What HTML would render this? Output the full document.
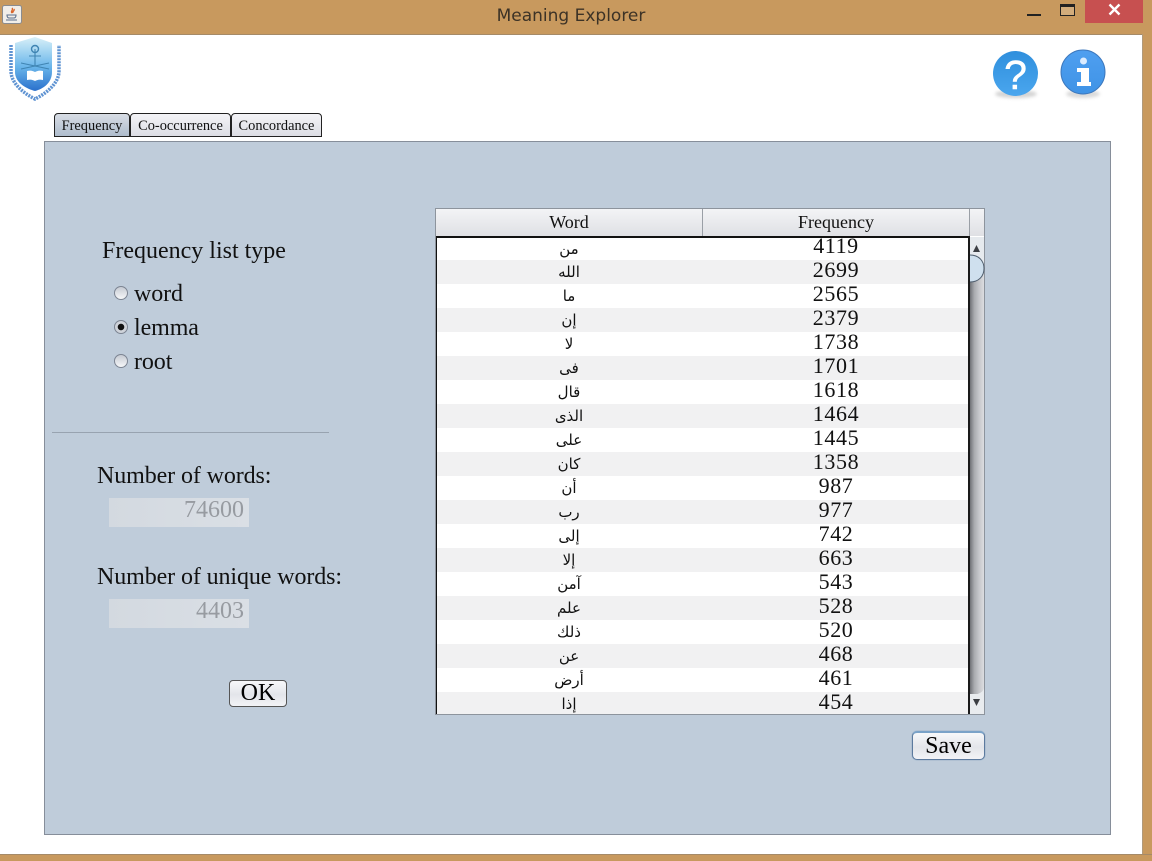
<!DOCTYPE html>
<html><head><meta charset="utf-8"><style>
html,body{margin:0;padding:0;width:1152px;height:861px;overflow:hidden;background:#fff;font-family:"Liberation Serif",serif;color:#111}
.a{position:absolute;white-space:nowrap}
.t{font-size:24px;line-height:28px;letter-spacing:-.1px}
.tab{position:absolute;top:113px;height:24px;box-sizing:border-box;border:1px solid #222;border-radius:4px 4px 0 0;background:linear-gradient(#f4f4f7,#dcdde4);font-size:14.4px;line-height:24px;text-align:center;color:#111}
.radio{position:absolute;left:114px;width:14px;height:14px;box-sizing:border-box;border:1px solid #7c8492;border-radius:50%;background:linear-gradient(#c6cbd3,#f6f7f9)}
.field{position:absolute;left:109px;width:140px;height:29px;background:linear-gradient(90deg,#d3d9e0,#dadfe5);color:#979ba1;font-size:24px;line-height:24px;text-align:right;box-sizing:border-box;padding-right:5px}
.row{position:absolute;left:437px;width:532px;height:24px}
.w{position:absolute;left:0;width:264px;text-align:center;font-family:"DejaVu Sans",sans-serif;font-size:15px;line-height:24px;top:0}
.n{position:absolute;left:266px;width:266px;text-align:center;font-size:22px;line-height:18px;top:1px;letter-spacing:.6px}
.btn{position:absolute;box-sizing:border-box;background:linear-gradient(#f7f8fa,#e3e5ea 55%,#f2f3f6);text-align:center;color:#000}
</style></head><body>
<div class="a" style="left:0;top:0;width:1152px;height:34px;background:#c8995e;border-bottom:1px solid #a58a68"></div>
<div class="a" style="left:1142px;top:34px;width:10px;height:827px;background:#c8995e;border-left:1px solid #b09a7c;box-sizing:border-box"></div>
<div class="a" style="left:0;top:854px;width:1152px;height:7px;background:#c8995e;border-top:1px solid #a58a68;box-sizing:border-box"></div>

<svg class="a" style="left:2px;top:5px" width="21" height="20" viewBox="0 0 21 20"><rect x=".5" y=".5" width="19" height="18" rx="2" fill="#f1eee9" stroke="#8a8c90"/><path d="M10 3c2 2-2 3 0 5M12 4c1 2-2 2-1 4" stroke="#d9662c" stroke-width="1.4" fill="none"/><path d="M5 10h9c0 2-1 3-2 3H7c-1 0-2-1-2-3zM4 15h11" stroke="#5b6f8c" stroke-width="1.1" fill="none"/></svg>
<div class="a" style="left:0;top:6px;width:1142px;text-align:center;font-family:'DejaVu Sans','Liberation Sans',sans-serif;font-size:17px;line-height:20px;color:#3c3226">Meaning Explorer</div>
<div class="a" style="left:1027px;top:14px;width:14px;height:2px;background:#222"></div>
<div class="a" style="left:1060px;top:4px;width:15px;height:12px;box-sizing:border-box;border:1px solid #222;border-top:3px solid #222;background:#d3ad7c"></div>
<div class="a" style="left:1085px;top:0;width:58px;height:23px;background:#c75050"></div>
<svg class="a" style="left:1107px;top:2px" width="15" height="15" viewBox="0 0 15 15"><path d="M2.500 2.500l10 10M12.500 2.500l-10 10" stroke="#fff" stroke-width="2.400"/></svg>

<!-- logo -->
<svg class="a" style="left:7px;top:36px;filter:blur(.35px)" width="56" height="66" viewBox="0 0 56 66">
<defs><linearGradient id="s" x1="0" y1="0" x2="0" y2="1"><stop offset="0" stop-color="#d8f0f8"/><stop offset=".55" stop-color="#6ab6ea"/><stop offset="1" stop-color="#2a70cc"/></linearGradient></defs>
<path d="M28 1L45 7V36C45 47 36 53 28 55C20 53 8 47 8 36V7Z" fill="url(#s)"/>
<path d="M4 9V35C4 48 18 58 28 63C38 58 52 48 52 35V9" fill="none" stroke="#5f93d2" stroke-width="3.500" stroke-dasharray="2 1"/>
<path d="M28 13V30M22 20h12M14 27l28 6M42 27l-28 6" stroke="#3f84b2" stroke-width="1.100" fill="none"/>
<circle cx="28" cy="13" r="3.500" fill="none" stroke="#3f84b2" stroke-width="1.400"/>
<path d="M20 35c4-1 6 0 8 1 2-1 4-2 8-1v9c-4-1-6 0-8 1-2-1-4-2-8-1z" fill="#fff"/>
</svg>

<!-- help / info -->
<svg class="a" style="left:985px;top:44px" width="130" height="62" viewBox="0 0 130 62">
<defs>
<linearGradient id="h" x1="0" y1="0" x2="0" y2="1"><stop offset="0" stop-color="#2f8fdd"/><stop offset="1" stop-color="#4aa6ee"/></linearGradient>
<linearGradient id="i" x1="0" y1="0" x2="0" y2="1"><stop offset="0" stop-color="#4f9ff0"/><stop offset="1" stop-color="#3f93e6"/></linearGradient>
</defs>
<ellipse cx="31" cy="50" rx="21" ry="4" fill="#d4d4d4" style="filter:blur(1.500px)"/>
<ellipse cx="98" cy="50" rx="17" ry="4" fill="#dadada" style="filter:blur(1.500px)"/>
<circle cx="30.500" cy="29.500" r="22.500" fill="url(#h)"/>
<text x="30.500" y="45" text-anchor="middle" font-family="Liberation Sans,sans-serif" font-size="41" fill="#fff" stroke="#fff" stroke-width=".5">?</text>
<circle cx="98" cy="28" r="22" fill="url(#i)" stroke="#3d78bd" stroke-width="1"/>
<circle cx="98.500" cy="17" r="3.500" fill="#dcecff"/>
<path d="M92 24H104V38H106V42H92V38H96V28H92Z" fill="#fff"/>
</svg>

<div class="tab" style="left:54px;width:76px;background:linear-gradient(#d8dde5,#aebccc);">Frequency</div>
<div class="tab" style="left:130px;width:101px">Co-occurrence</div>
<div class="tab" style="left:231px;width:91px">Concordance</div>

<div class="a" style="left:44px;top:141px;width:1067px;height:694px;box-sizing:border-box;background:#bfccda;border:1px solid #868e9a"></div>

<div class="a" style="left:102px;top:237px;font-size:24px;line-height:28px">Frequency list type</div>
<div class="radio" style="top:286px"></div>
<div class="a t" style="left:134px;top:280px">word</div>
<div class="radio" style="top:320px;background:radial-gradient(circle,#111 0 3px,#cfd3da 3.500px)"></div>
<div class="a t" style="left:134px;top:314px">lemma</div>
<div class="radio" style="top:354px"></div>
<div class="a t" style="left:134px;top:348px">root</div>
<div class="a" style="left:52px;top:432px;width:277px;height:1px;background:#98a3b0"></div>
<div class="a t" style="left:97px;top:462px">Number of words:</div>
<div class="field" style="top:498px">74600</div>
<div class="a t" style="left:97px;top:563px">Number of unique words:</div>
<div class="field" style="top:599px">4403</div>
<div class="btn" style="left:229px;top:680px;width:58px;height:27px;border:1px solid #555;border-radius:4px;font-size:24px;line-height:25px">OK</div>

<!-- table -->
<div class="a" style="left:435px;top:208px;width:550px;height:507px;background:#fff;box-sizing:border-box;border:1px solid #8d949d"></div>
<div class="a" style="left:436px;top:209px;width:548px;height:27px;background:linear-gradient(#f3f4f6,#dfe0e4);font-size:18px;line-height:27px">
  <div class="a" style="left:0;width:266px;text-align:center">Word</div>
  <div class="a" style="left:266px;top:0;width:1px;height:27px;background:#9a9fa6"></div>
  <div class="a" style="left:267px;width:266px;text-align:center">Frequency</div>
  <div class="a" style="left:533px;top:0;width:1px;height:27px;background:#9a9fa6"></div>
</div>

<div class="row" style="top:238px;height:22px;background:#fff"><div class="w" style="top:-1px">من</div><div class="n" style="top:-1px">4119</div></div>
<div class="row" style="top:260px;background:#f1f1f2"><div class="w">الله</div><div class="n">2699</div></div>
<div class="row" style="top:284px"><div class="w">ما</div><div class="n">2565</div></div>
<div class="row" style="top:308px;background:#f1f1f2"><div class="w">إن</div><div class="n">2379</div></div>
<div class="row" style="top:332px"><div class="w">لا</div><div class="n">1738</div></div>
<div class="row" style="top:356px;background:#f1f1f2"><div class="w">فى</div><div class="n">1701</div></div>
<div class="row" style="top:380px"><div class="w">قال</div><div class="n">1618</div></div>
<div class="row" style="top:404px;background:#f1f1f2"><div class="w">الذى</div><div class="n">1464</div></div>
<div class="row" style="top:428px"><div class="w">على</div><div class="n">1445</div></div>
<div class="row" style="top:452px;background:#f1f1f2"><div class="w">كان</div><div class="n">1358</div></div>
<div class="row" style="top:476px"><div class="w">أن</div><div class="n">987</div></div>
<div class="row" style="top:500px;background:#f1f1f2"><div class="w">رب</div><div class="n">977</div></div>
<div class="row" style="top:524px"><div class="w">إلى</div><div class="n">742</div></div>
<div class="row" style="top:548px;background:#f1f1f2"><div class="w">إلا</div><div class="n">663</div></div>
<div class="row" style="top:572px"><div class="w">آمن</div><div class="n">543</div></div>
<div class="row" style="top:596px;background:#f1f1f2"><div class="w">علم</div><div class="n">528</div></div>
<div class="row" style="top:620px"><div class="w">ذلك</div><div class="n">520</div></div>
<div class="row" style="top:644px;background:#f1f1f2"><div class="w">عن</div><div class="n">468</div></div>
<div class="row" style="top:668px"><div class="w">أرض</div><div class="n">461</div></div>
<div class="row" style="top:692px;height:22px;background:#f1f1f2;overflow:hidden"><div class="w">إذا</div><div class="n">454</div></div>

<div class="a" style="left:436px;top:236px;width:533px;height:2px;background:#111"></div>
<div class="a" style="left:436px;top:236px;width:1px;height:478px;background:#111"></div>

<!-- scrollbar -->
<div class="a" style="left:970px;top:237px;width:14px;height:477px;background:linear-gradient(90deg,#6f7176,#a8aaae 30%,#c6c7cb 65%,#dcdde0)"></div>
<div class="a" style="left:970px;top:237px;width:14px;height:32px;background:#e6eaee"></div>
<div class="a" style="left:970px;top:694px;width:14px;height:20px;background:#e9ecef"></div>
<svg class="a" style="left:970px;top:237px" width="15" height="48" viewBox="0 0 15 48"><path d="M3 15l3.500-7 3.500 7z" fill="#3c3f44"/><path d="M0 18c9 0 14 6 14 13.500S9 45 0 45" fill="#cfe0ee" stroke="#4d5c6c" stroke-width="1"/></svg>
<svg class="a" style="left:970px;top:685px" width="14" height="29" viewBox="0 0 14 29"><path d="M0 10C7 10 13 8 14 3V10z" fill="#e9ecef"/><path d="M3 14l3.500 7 3.500-7z" fill="#3c3f44"/></svg>
<div class="a" style="left:968px;top:236px;width:2px;height:478px;background:#1a1a1a"></div>

<div class="btn" style="left:912px;top:731px;width:73px;height:29px;border:1px solid #5c7a9e;border-top:2px solid #7aa2c8;border-radius:5px;box-shadow:0 0 1px #5c86b0;font-size:24px;line-height:26px">Save</div>
</body></html>
